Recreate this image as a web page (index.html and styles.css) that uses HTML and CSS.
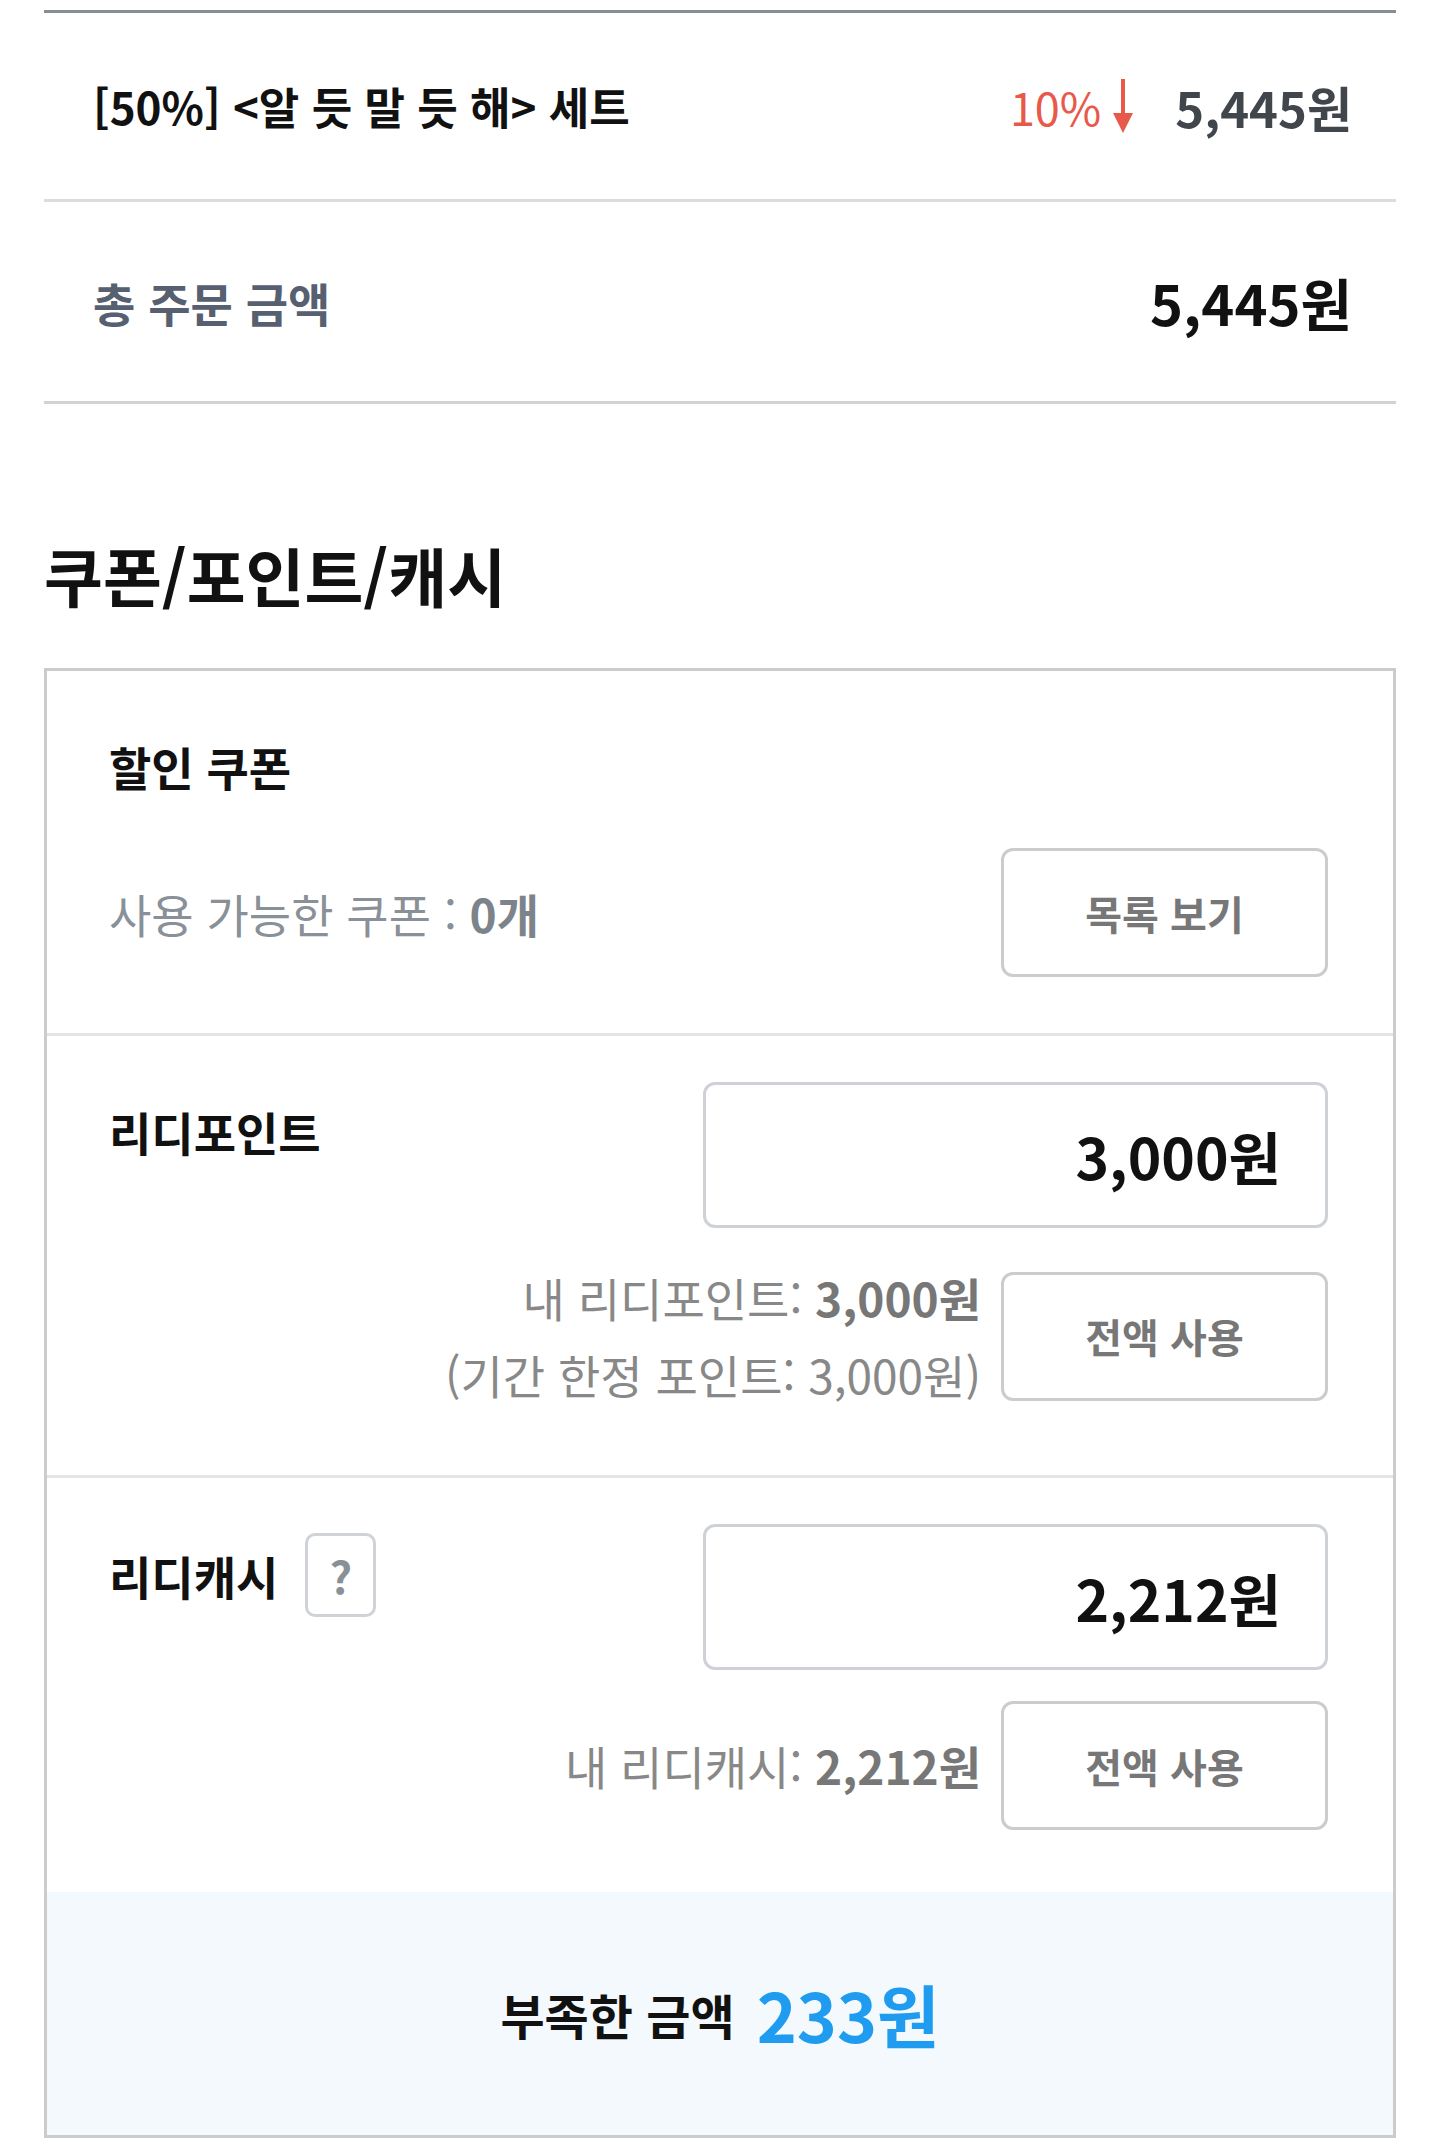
FILE: index.html
```html
<!DOCTYPE html>
<html lang="ko">

<head>
    <meta charset="UTF-8">
    <meta name="viewport" content="width=device-width, initial-scale=1.0">
    <title>결제하기</title>
    <link rel="stylesheet" href="styles.css">
</head>

<body>
    <main class="checkout">
        <section class="order">
            <div class="order-item">
                <p class="item-name">[50%] &lt;알 듯 말 듯 해&gt; 세트</p>
                <div class="item-price">
                    <span class="discount">10%<svg class="down-arrow" viewBox="0 0 20 54" width="20" height="54">
                            <line x1="10" y1="0" x2="10" y2="38" stroke="#e8594b" stroke-width="4" />
                            <polygon points="0,34 20,34 10,54" fill="#e8594b" />
                        </svg></span>
                    <span class="price">5,445원</span>
                </div>
            </div>
            <div class="order-total">
                <p class="total-label">총 주문 금액</p>
                <p class="total-price">5,445원</p>
            </div>
        </section>

        <h2 class="section-title">쿠폰/포인트/캐시</h2>

        <div class="pay-box">
            <div class="pay-part coupon">
                <h3 class="pay-label">할인 쿠폰</h3>
                <div class="coupon-row">
                    <p class="coupon-count">사용 가능한 쿠폰 : <b>0개</b></p>
                    <button class="btn">목록 보기</button>
                </div>
            </div>

            <div class="pay-part">
                <div class="pay-head">
                    <h3 class="pay-label">리디포인트</h3>
                    <input class="amount" type="text" value="3,000원" readonly>
                </div>
                <div class="pay-foot">
                    <p class="balance">내 리디포인트: <b>3,000원</b><br>(기간 한정 포인트: 3,000원)</p>
                    <button class="btn">전액 사용</button>
                </div>
            </div>

            <div class="pay-part last">
                <div class="pay-head">
                    <div class="label-group">
                        <h3 class="pay-label">리디캐시</h3>
                        <button class="help">?</button>
                    </div>
                    <input class="amount" type="text" value="2,212원" readonly>
                </div>
                <div class="pay-foot">
                    <p class="balance">내 리디캐시: <b>2,212원</b></p>
                    <button class="btn">전액 사용</button>
                </div>
            </div>

            <div class="shortage">
                <span class="shortage-label">부족한 금액</span>
                <strong class="shortage-price">233원</strong>
            </div>
        </div>
    </main>
</body>

</html>
```

FILE: styles.css
```css
body {
    margin: 0;
    padding: 0;
    background-color: #ffffff;
    color: #111111;
    font-family: "Noto Sans CJK KR", "Noto Sans", sans-serif;
}

p,
h2,
h3 {
    margin: 0;
}

.checkout {
    padding: 10px 44px 5px;
}

/* 주문 상품 */
.order {
    border-top: 3px solid #888d93;
}

.order-item,
.order-total {
    display: flex;
    justify-content: space-between;
    align-items: center;
    padding: 0 44px 0 49px;
}

.order-item {
    height: 186px;
    border-bottom: 3px solid #dcdcdc;
}

.order-total {
    height: 199px;
    border-bottom: 3px solid #d0d2d6;
}

.item-name {
    font-size: 44px;
    font-weight: 700;
}

.item-price {
    display: flex;
    align-items: center;
}

.discount {
    display: flex;
    align-items: center;
    color: #e8594b;
    font-size: 45px;
    font-weight: 400;
}

.down-arrow {
    margin-left: 12px;
}

.price {
    margin-left: 42px;
    color: #41464c;
    font-size: 49px;
    font-weight: 700;
}

.total-label {
    color: #566070;
    font-size: 46px;
    font-weight: 700;
}

.total-price {
    font-size: 56px;
    font-weight: 700;
}

.section-title {
    margin: 129px 0 53px;
    font-size: 64px;
    line-height: 82px;
    font-weight: 700;
}

/* 쿠폰/포인트/캐시 박스 */
.pay-box {
    border: 3px solid #cccccc;
}

.pay-part {
    padding: 46px 65px 62px 62px;
    border-bottom: 3px solid #e5e5e5;
}

.pay-part.coupon {
    padding-bottom: 56px;
}

.pay-part.last {
    border-bottom: none;
}

.pay-label {
    margin-top: 19px;
    font-size: 46px;
    line-height: 60px;
    font-weight: 700;
}

.coupon-row {
    display: flex;
    justify-content: space-between;
    align-items: center;
    margin-top: 52px;
}

.coupon-count {
    color: #8a9097;
    font-size: 46px;
}

.coupon-count b {
    color: #7d838a;
}

.btn {
    width: 327px;
    height: 129px;
    box-sizing: border-box;
    border: 3px solid #cccccc;
    border-radius: 12px;
    background-color: #ffffff;
    color: #777777;
    font-family: inherit;
    font-size: 40px;
    font-weight: 700;
}

.pay-head {
    display: flex;
    justify-content: space-between;
    align-items: flex-start;
}

.label-group {
    display: flex;
    align-items: center;
    gap: 27px;
    margin-top: 9px;
}

.label-group .pay-label {
    margin-top: 0;
}

.help {
    width: 71px;
    height: 84px;
    box-sizing: border-box;
    border: 3px solid #cfd3d8;
    border-radius: 10px;
    background-color: #ffffff;
    color: #8a9097;
    font-family: inherit;
    font-size: 44px;
    font-weight: 700;
    padding: 0;
}

.amount {
    width: 625px;
    height: 146px;
    box-sizing: border-box;
    border: 3px solid #ced2d6;
    border-radius: 12px;
    padding: 0 44px 0 20px;
    text-align: right;
    color: #111111;
    font-family: inherit;
    font-size: 57px;
    font-weight: 700;
    outline: none;
}

.pay-foot {
    display: flex;
    justify-content: flex-end;
    align-items: center;
    gap: 20px;
    margin-top: 31px;
}

.balance {
    color: #888888;
    font-size: 46px;
    line-height: 77px;
    text-align: right;
}

.balance b {
    color: #777777;
}

/* 부족한 금액 */
.shortage {
    display: flex;
    justify-content: center;
    align-items: center;
    gap: 22px;
    height: 243px;
    background-color: #f4f9fd;
}

.shortage-label {
    font-size: 48px;
    font-weight: 700;
}

.shortage-price {
    color: #1f9cf0;
    font-size: 68px;
    font-weight: 700;
}
```
